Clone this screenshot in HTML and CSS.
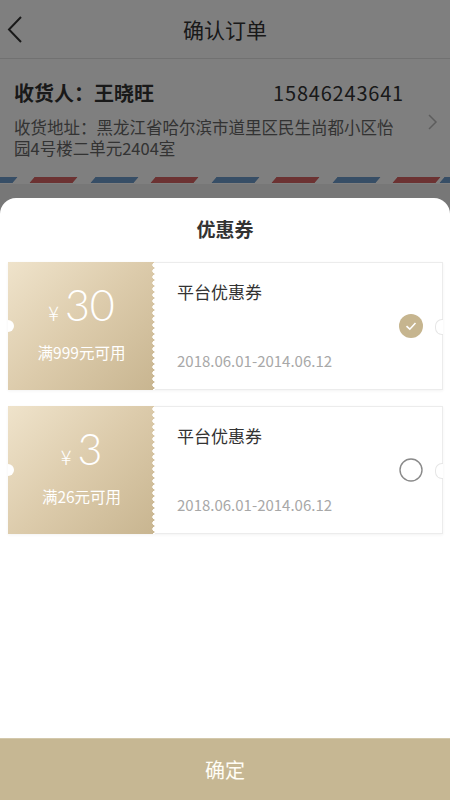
FILE: index.html
```html
<!DOCTYPE html>
<html lang="zh-CN">
<head>
    <meta charset="UTF-8">
    <meta name="viewport" content="width=device-width, initial-scale=1.0">
    <title>确认订单 - 优惠券</title>
    <link rel="stylesheet" href="styles.css">
</head>
<body>

    <div class="page">
        <header class="topbar">
            <span class="back">
                <svg width="24" height="30" viewBox="0 0 24 30"><polyline points="14,2 2,14.5 14,27" fill="none" stroke="#333" stroke-width="2"/></svg>
            </span>
            <h1>确认订单</h1>
        </header>

        <section class="address">
            <div class="addr-main">
                <div class="addr-row">
                    <span class="name">收货人：王晓旺</span>
                    <span class="phone">15846243641</span>
                </div>
                <p class="addr-text">收货地址：黑龙江省哈尔滨市道里区民生尚都小区怡园4号楼二单元2404室</p>
            </div>
            <svg class="more" width="10" height="16" viewBox="0 0 10 16"><polyline points="1,1 8,8 1,15" fill="none" stroke="#bbb" stroke-width="1.5"/></svg>
        </section>
        <div class="stripes"><div class="stripes-inner"></div></div>
    </div>

    <div class="mask"></div>

    <div class="sheet">
        <h2>优惠券</h2>
        <ul class="coupons">
            <li class="coupon">
                <div class="coupon-left">
                    <div class="amount"><span class="yen">¥</span>30</div>
                    <div class="cond">满999元可用</div>
                </div>
                <div class="coupon-right">
                    <div class="info">
                        <div class="title">平台优惠券</div>
                        <div class="date">2018.06.01-2014.06.12</div>
                    </div>
                    <span class="check on">
                        <svg width="24" height="24" viewBox="0 0 24 24"><circle cx="12" cy="12" r="12" fill="#c6b58f"/><polyline points="7.5,12.2 10.8,15.2 16.5,9" fill="none" stroke="#fff" stroke-width="1.6"/></svg>
                    </span>
                </div>
            </li>
            <li class="coupon">
                <div class="coupon-left">
                    <div class="amount"><span class="yen">¥</span>3</div>
                    <div class="cond">满26元可用</div>
                </div>
                <div class="coupon-right">
                    <div class="info">
                        <div class="title">平台优惠券</div>
                        <div class="date">2018.06.01-2014.06.12</div>
                    </div>
                    <span class="check">
                        <svg width="24" height="24" viewBox="0 0 24 24"><circle cx="12" cy="12" r="11" fill="none" stroke="#8a8a8a" stroke-width="1.4"/></svg>
                    </span>
                </div>
            </li>
        </ul>
        <button class="confirm">确定</button>
    </div>

</body>
</html>
```

FILE: styles.css
```css
* { margin: 0; padding: 0; box-sizing: border-box; }
body {
    width: 450px; height: 800px; overflow: hidden; background: #eee;
    font-family: "Noto Sans CJK SC", "Noto Sans", sans-serif; color: #333;
}

/* page behind the sheet */
.page { background: #eee; height: 800px; }
.topbar {
    height: 59px; background: #fff; border-bottom: 1px solid #e2e2e2;
    display: flex; align-items: center; justify-content: center; position: relative;
}
.topbar h1 { font-size: 21px; font-weight: normal; color: #333; }
.back { position: absolute; left: 7px; top: 15px; }

.address { background: #fff; display: flex; align-items: center; padding: 19px 12px 17px 14px; }
.addr-main { flex: 1; min-width: 0; }
.addr-row { display: flex; justify-content: space-between; align-items: center; height: 28px; }
.name { font-size: 20px; font-weight: bold; }
.phone { font-size: 20px; letter-spacing: 0.8px; }
.addr-text { font-size: 16.5px; line-height: 21px; color: #666; margin-top: 11px; max-width: 388px; word-break: break-all; }
.more { flex-shrink: 0; margin-left: 24px; margin-top: 6px; }

.stripes { background: #fff; height: 8px; padding-top: 1px; overflow: hidden; }
.stripes-inner {
    height: 6px; margin: 0 -10px;
    background: repeating-linear-gradient(90deg, #6f9ccc 0 43px, transparent 43px 60.5px, #d86565 60.5px 103.5px, transparent 103.5px 121px);
    background-position: -18px 0;
    transform: skewX(-40deg);
}

.mask { position: fixed; top: 0; left: 0; right: 0; bottom: 0; background: rgba(0, 0, 0, 0.5); }

/* coupon sheet */
.sheet {
    position: fixed; top: 198px; left: 0; right: 0; bottom: 0;
    background: #fff; border-radius: 16px 16px 0 0;
    display: flex; flex-direction: column;
}
.sheet h2 { font-size: 19px; font-weight: bold; line-height: 22px; text-align: center; padding-top: 20px; color: #333; }

.coupons { list-style: none; flex: 1; padding: 22px 7px 0 8px; display: flex; flex-direction: column; gap: 16px; }
.coupon { display: flex; height: 128px; box-shadow: 0 1px 3px rgba(0, 0, 0, 0.05); }

.coupon-left {
    width: 147px; position: relative; color: #fff; text-align: center;
    background: linear-gradient(135deg, #efe3cb 0%, #dccbab 50%, #c8b590 100%);
    padding-top: 20px;
}
.coupon-left::before {
    content: ""; position: absolute; left: 0; top: 50%; margin-top: -6px;
    width: 6px; height: 12px; border-radius: 0 6px 6px 0; background: #fff;
}
.coupon-left::after {
    content: ""; position: absolute; right: -3px; top: 0; bottom: 0; width: 6px;
    background: radial-gradient(circle at 3px 3px, #fff 2.4px, transparent 2.9px) 0 0 / 6px 6px repeat-y;
}
.amount { font-family: Lato, "Liberation Sans", sans-serif; font-weight: 300; font-size: 43px; line-height: 46px; }
.yen { font-family: "Noto Sans CJK SC", sans-serif; font-size: 20px; margin-right: 6px; }
.cond { font-size: 15.5px; line-height: 20px; margin-top: 6px; }

.coupon-right {
    flex: 1; display: flex; align-items: center; position: relative;
    border: 1px solid #ececec; border-left: none; padding: 17px 19px 18px 22px;
}
.coupon-right::after {
    content: ""; position: absolute; right: -1px; top: 50%; margin-top: -7px;
    width: 7px; height: 14px; border: 1px solid #e6e6e6; border-right: none;
    border-radius: 7px 0 0 7px; background: #fff;
}
.info { flex: 1; height: 100%; display: flex; flex-direction: column; justify-content: space-between; }
.title { font-size: 17px; line-height: 24px; color: #333; }
.date { font-size: 15px; line-height: 20px; color: #a8a8a8; }
.check { display: flex; }

.confirm {
    height: 62px; border: none; border-top: 1px solid #d3c8ab; background: #c6b793;
    color: #fffdf6; font-size: 20px; font-family: "Noto Sans CJK SC", sans-serif;
}
```
